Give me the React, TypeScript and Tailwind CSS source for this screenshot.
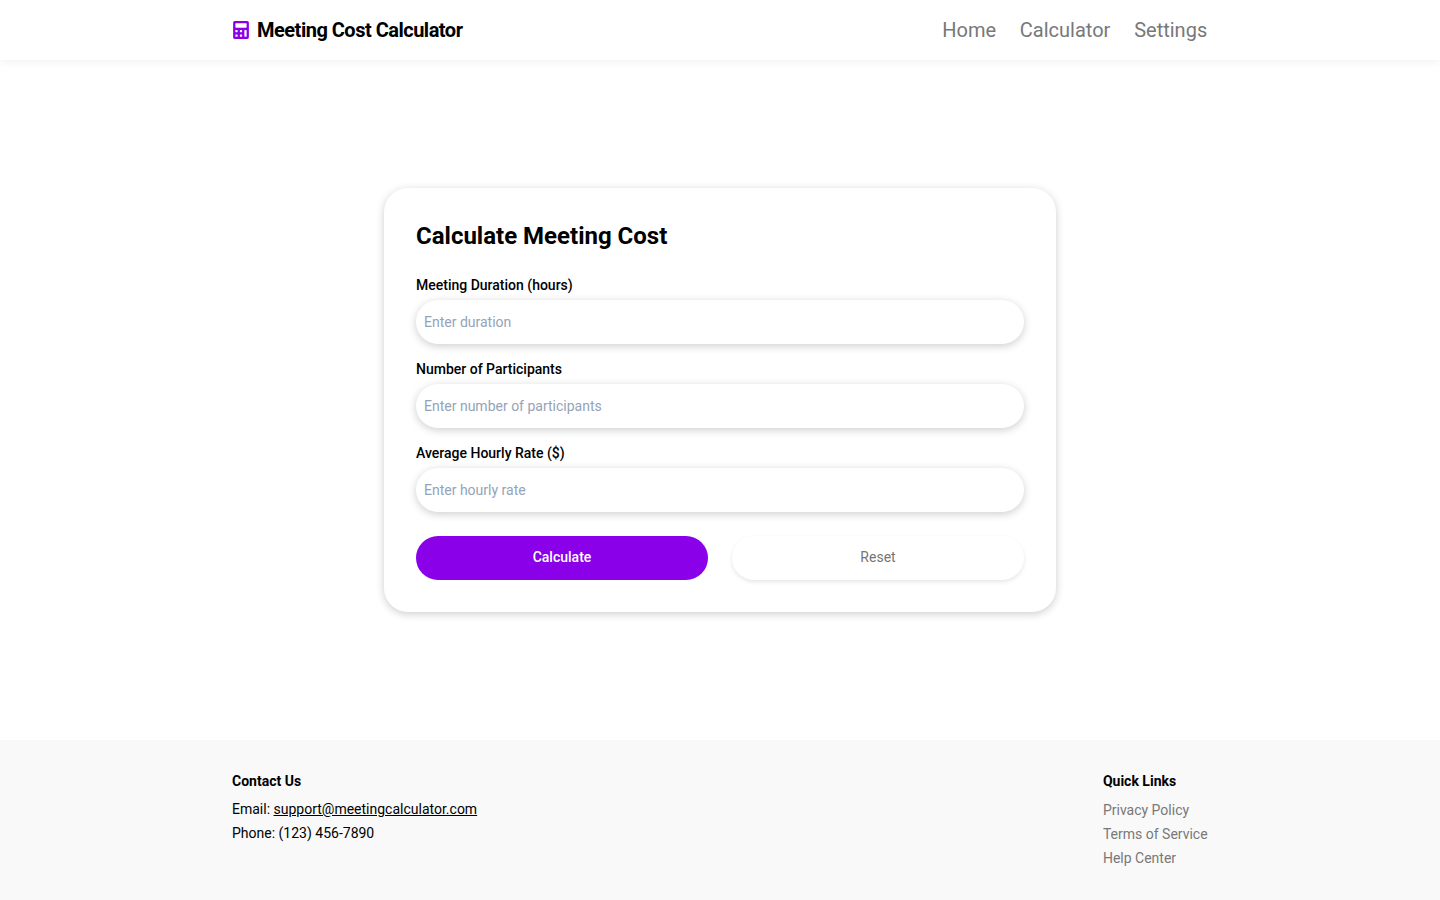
import React from "react";
import { FaCalculator } from "react-icons/fa";

const fields = [
  { id: "duration", label: "Meeting Duration (hours)", placeholder: "Enter duration" },
  { id: "participants", label: "Number of Participants", placeholder: "Enter number of participants" },
  { id: "rate", label: "Average Hourly Rate ($)", placeholder: "Enter hourly rate" },
];

export default function App() {
  return (
    <div className="flex min-h-screen flex-col bg-white font-['Roboto',sans-serif] text-sm text-black">
      <header className="h-[60px] bg-white shadow-[0_2px_8px_rgba(0,0,0,0.05)]">
        <div className="mx-auto flex h-full w-[976px] items-center justify-between">
          <div className="flex items-center gap-[7px]">
            <FaCalculator className="size-[18px] text-[#8a00e8]" />
            <span className="text-xl font-bold tracking-[-0.5px]">Meeting Cost Calculator</span>
          </div>
          <nav className="flex gap-[23.8px] pr-[0.8px] text-xl text-[#787878]">
            <a href="#home">Home</a>
            <a href="#calculator">Calculator</a>
            <a href="#settings">Settings</a>
          </nav>
        </div>
      </header>
      <main className="flex flex-1 items-center justify-center">
        <section className="w-[672px] rounded-3xl bg-white p-8 shadow-[0_2px_8px_rgba(0,0,0,0.2)]">
          <h1 className="mb-[23px] text-2xl font-bold">Calculate Meeting Cost</h1>
          <form className="flex flex-col gap-[15px]">
            {fields.map((f) => (
              <div key={f.id} className="flex flex-col">
                <label htmlFor={f.id} className="mb-[5px] font-medium">{f.label}</label>
                <input id={f.id} placeholder={f.placeholder} className="h-11 rounded-full px-2 shadow-[0_2px_8px_rgba(0,0,0,0.2)] placeholder:text-[#94a3b8]" />
              </div>
            ))}
            <div className="mt-[9px] grid grid-cols-2 gap-6">
              <button type="button" className="h-11 rounded-full bg-[#8a00e8] pb-0.5 font-medium text-white">Calculate</button>
              <button type="button" className="h-11 rounded-full pb-0.5 text-[#757575] shadow-[0_2px_4px_rgba(0,0,0,0.1)]">Reset</button>
            </div>
          </form>
        </section>
      </main>
      <footer className="h-40 bg-[#f9f9f9] pt-[31px]">
        <div className="mx-auto flex w-[976px] justify-between">
          <div>
            <h2 className="mb-1.5 font-bold">Contact Us</h2>
            <p className="leading-6">Email: <a className="underline" href="#email">support@meetingcalculator.com</a></p>
            <p className="leading-6">Phone: (123) 456-7890</p>
          </div>
          <div className="pr-[0.4px]">
            <h2 className="mb-[7px] font-bold">Quick Links</h2>
            <ul className="leading-6 text-[#787878]">
              <li>Privacy Policy</li>
              <li>Terms of Service</li>
              <li>Help Center</li>
            </ul>
          </div>
        </div>
      </footer>
    </div>
  );
}
